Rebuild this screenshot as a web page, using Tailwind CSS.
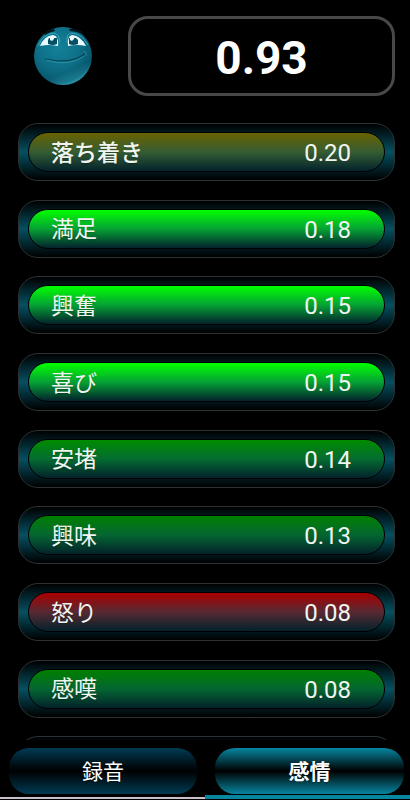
<!DOCTYPE html>
<html lang="ja">
  <head>
    <meta charset="UTF-8" />
    <meta name="viewport" content="width=device-width, initial-scale=1" />
    <title>感情</title>
    <script src="https://cdn.jsdelivr.net/npm/@tailwindcss/browser@4"></script>
  </head>
  <body
    class="flex h-screen flex-col overflow-hidden bg-black font-['Roboto','Noto_Sans_CJK_JP',sans-serif] text-white"
  >
    <header class="flex shrink-0 items-center pt-4 pr-[15px] pl-8">
      <svg class="h-16 w-16 shrink-0" viewBox="0 0 64 64" role="img" aria-label="笑顔">
        <defs>
          <radialGradient id="face" cx="0.42" cy="0.35" r="0.7">
            <stop offset="0" stop-color="#14819a" />
            <stop offset="0.5" stop-color="#0e7088" />
            <stop offset="0.88" stop-color="#07566c" />
            <stop offset="1" stop-color="#1f90a6" />
          </radialGradient>
          <linearGradient id="shade" x1="0.3" y1="0" x2="0.7" y2="1">
            <stop offset="0.75" stop-color="#43bacb" stop-opacity="0" />
            <stop offset="1" stop-color="#43bacb" stop-opacity="0.55" />
          </linearGradient>
        </defs>
        <circle cx="31" cy="32" r="29" fill="url(#face)" />
        <circle cx="31" cy="32" r="29" fill="url(#shade)" />
        <!-- brows -->
        <path d="M12 10Q16 6 22 5L23 7Q17 8 13 11Z" fill="#00141c" />
        <path d="M37 5Q45 4 51 8L50 10Q44 7 38 7Z" fill="#00141c" />
        <!-- eyes -->
        <path d="M8 22Q12 12 21 11Q27 12 26 22Q17 20 8 22Z" fill="#e9fdff" />
        <path d="M36 22Q35 12 40 11Q49 12 54 22Q45 20 36 22Z" fill="#e9fdff" />
        <path d="M17 14H25V20Q21 22 16 20V16Z" fill="#075064" />
        <path d="M37 14H44L46 16V20Q41 22 37 20Z" fill="#075064" />
        <path d="M18 13H22V15L20 17L18 16ZM38 13H42V15L40 17L38 16Z" fill="#e9fdff" />
        <path d="M6 22Q11 10 22 9Q27 10 28 18M35 18Q34 9 40 9Q50 10 56 21" fill="none" stroke="#36a9bc" />
        <!-- mouth -->
        <path d="M13 35Q38 41 53 30" fill="none" stroke="#02394b" />
        <path d="M14 36Q38 43 52 32M52 27Q55 29 54 32" fill="none" stroke="#38a7b9" stroke-opacity="0.6" />
      </svg>
      <output
        class="ml-8 flex h-20 flex-1 items-center justify-center rounded-[20px] border-3 border-[#484848] pt-1 text-[46px] font-bold"
        >0.93</output
      >
    </header>

    <main class="mt-[27px] min-h-0 flex-1 overflow-hidden pr-[15px] pl-[18px]">
      <ul class="grid h-[690px] grid-rows-9 text-[#f0f5f0]">
        <li>
          <div class="rounded-[20px] border border-[#2c3234] bg-linear-to-b/srgb from-black via-[#055061] to-black px-[9px] py-2">
            <div class="flex h-10 items-center justify-between rounded-[20px] border border-black bg-linear-to-b/srgb from-[#696200] via-[#355d34] to-[#03222b] pt-[2px] pr-[33px] pl-[22px]">
              <span class="pt-[2px] text-[23px] font-medium text-shadow-sm">落ち着き</span>
              <span class="text-2xl">0.20</span>
            </div>
          </div>
        </li>
        <li>
          <div class="rounded-[20px] border border-[#2c3234] bg-linear-to-b/srgb from-black via-[#055061] to-black px-[9px] py-2">
            <div class="flex h-10 items-center justify-between rounded-[20px] border border-black bg-linear-to-b/srgb from-[#00ff00] via-[#05a235] to-[#03222b] pt-[2px] pr-[33px] pl-[22px]">
              <span class="pt-[2px] text-[23px] text-shadow-sm">満足</span>
              <span class="text-2xl">0.18</span>
            </div>
          </div>
        </li>
        <li>
          <div class="rounded-[20px] border border-[#2c3234] bg-linear-to-b/srgb from-black via-[#055061] to-black px-[9px] py-2">
            <div class="flex h-10 items-center justify-between rounded-[20px] border border-black bg-linear-to-b/srgb from-[#00ff00] via-[#05a235] to-[#03222b] pt-[2px] pr-[33px] pl-[22px]">
              <span class="pt-[2px] text-[23px] text-shadow-sm">興奮</span>
              <span class="text-2xl">0.15</span>
            </div>
          </div>
        </li>
        <li>
          <div class="rounded-[20px] border border-[#2c3234] bg-linear-to-b/srgb from-black via-[#055061] to-black px-[9px] py-2">
            <div class="flex h-10 items-center justify-between rounded-[20px] border border-black bg-linear-to-b/srgb from-[#00ff00] via-[#05a235] to-[#03222b] pt-[2px] pr-[33px] pl-[22px]">
              <span class="pt-[2px] text-[23px] text-shadow-sm">喜び</span>
              <span class="text-2xl">0.15</span>
            </div>
          </div>
        </li>
        <li>
          <div class="rounded-[20px] border border-[#2c3234] bg-linear-to-b/srgb from-black via-[#055061] to-black px-[9px] py-2">
            <div class="flex h-10 items-center justify-between rounded-[20px] border border-black bg-linear-to-b/srgb from-[#008c00] via-[#046c32] to-[#03222b] pt-[2px] pr-[33px] pl-[22px]">
              <span class="pt-[2px] text-[23px] text-shadow-sm">安堵</span>
              <span class="text-2xl">0.14</span>
            </div>
          </div>
        </li>
        <li>
          <div class="rounded-[20px] border border-[#2c3234] bg-linear-to-b/srgb from-black via-[#055061] to-black px-[9px] py-2">
            <div class="flex h-10 items-center justify-between rounded-[20px] border border-black bg-linear-to-b/srgb from-[#008000] via-[#046632] to-[#03222b] pt-[2px] pr-[33px] pl-[22px]">
              <span class="pt-[2px] text-[23px] text-shadow-sm">興味</span>
              <span class="text-2xl">0.13</span>
            </div>
          </div>
        </li>
        <li>
          <div class="rounded-[20px] border border-[#2c3234] bg-linear-to-b/srgb from-black via-[#055061] to-black px-[9px] py-2">
            <div class="flex h-10 items-center justify-between rounded-[20px] border border-black bg-linear-to-b/srgb from-[#aa0000] via-[#572933] to-[#03222b] pt-[2px] pr-[33px] pl-[22px]">
              <span class="pt-[2px] text-[23px] text-shadow-sm">怒り</span>
              <span class="text-2xl">0.08</span>
            </div>
          </div>
        </li>
        <li>
          <div class="rounded-[20px] border border-[#2c3234] bg-linear-to-b/srgb from-black via-[#055061] to-black px-[9px] py-2">
            <div class="flex h-10 items-center justify-between rounded-[20px] border border-black bg-linear-to-b/srgb from-[#008000] via-[#046632] to-[#03222b] pt-[2px] pr-[33px] pl-[22px]">
              <span class="pt-[2px] text-[23px] text-shadow-sm">感嘆</span>
              <span class="text-2xl">0.08</span>
            </div>
          </div>
        </li>
        <li>
          <div class="h-[58px] rounded-[20px] border border-[#2c3234] bg-linear-to-b/srgb from-black via-[#055061] to-black"></div>
        </li>
      </ul>
    </main>

    <nav class="grid shrink-0 grid-cols-2 pt-2">
      <div class="flex flex-col border-b border-black pr-2 pl-[9px]">
        <button
          class="h-[46px] rounded-[20px] bg-linear-to-b/srgb from-[#003b53] via-black to-[#003b53] pt-1 text-[21px] text-shadow-sm"
        >
          録音
        </button>
      </div>
      <div class="flex flex-col border-b border-black pr-[6px] pl-[10px]">
        <button
          class="h-[46px] rounded-[20px] bg-linear-to-b/srgb from-[#0786a0] via-black to-[#0786a0] pt-1 text-[21px] font-bold text-shadow-sm"
          aria-current="page"
        >
          感情
        </button>
      </div>
      <div class="mt-[2px] mb-px h-[2px] bg-[#c9c0c9]"></div>
      <div class="mb-px h-1 bg-[#0786a0]"></div>
    </nav>
  </body>
</html>
